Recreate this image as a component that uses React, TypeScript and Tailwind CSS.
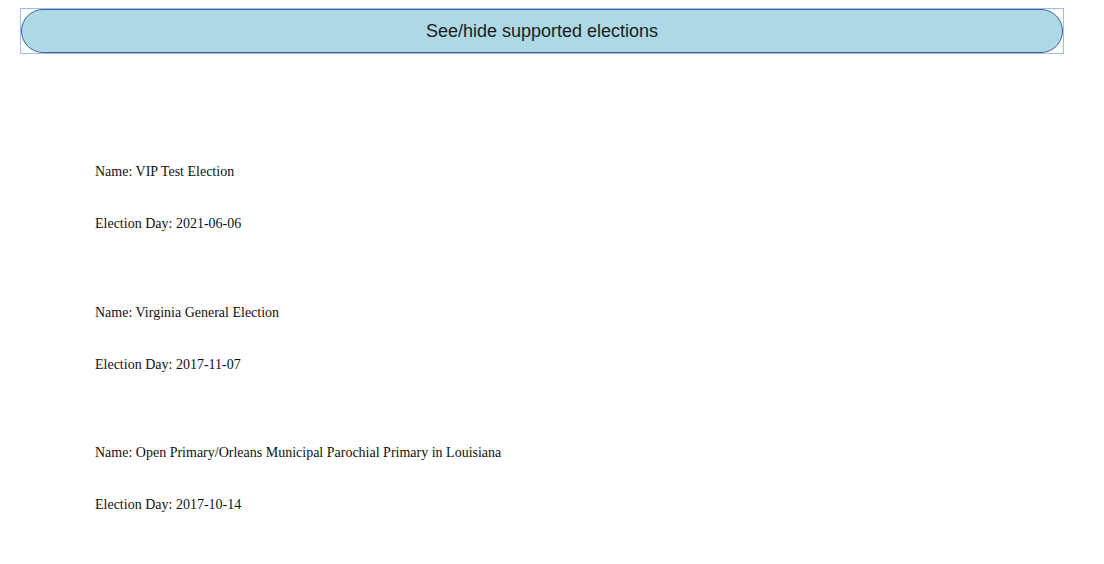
const elections = [
  { name: "VIP Test Election", day: "2021-06-06" },
  { name: "Virginia General Election", day: "2017-11-07" },
  {
    name: "Open Primary/Orleans Municipal Parochial Primary in Louisiana",
    day: "2017-10-14",
  },
];

export default function App() {
  return (
    <div className="min-h-[564px] bg-white">
      <div className="pl-5 pr-10 pt-2">
        {/* toggle button with focus outline */}
        <div className="border border-[#9fbdf5]">
          <button className="w-full h-[44px] rounded-full border border-[#44609c] bg-[#add8e6] text-[18px] text-[#1c1c1c] font-['Liberation_Sans',Arial,sans-serif]">
            See/hide supported elections
          </button>
        </div>
      </div>

      <div className="mt-[110px] pl-[95px] flex flex-col gap-[72.5px] font-['Liberation_Serif','Times_New_Roman',serif] text-[14px] leading-4 text-[#111]">
        {elections.map((e) => (
          <div key={e.name} className="flex flex-col gap-[36px]">
            <p>Name: {e.name}</p>
            <p>Election Day: {e.day}</p>
          </div>
        ))}
      </div>
    </div>
  );
}
